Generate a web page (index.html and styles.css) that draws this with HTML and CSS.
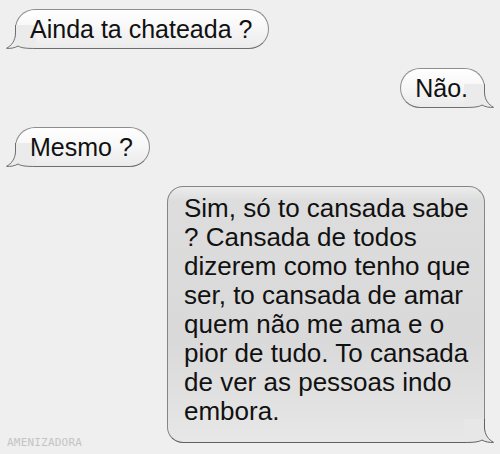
FILE: index.html
```html
<!DOCTYPE html>
<html lang="pt">
<head>
    <meta charset="UTF-8">
    <meta name="viewport" content="width=device-width, initial-scale=1.0">
    <title>Conversa</title>
    <link rel="stylesheet" href="styles.css">
</head>
<body>

<div class="chat">
    <!-- recebida -->
    <div class="bubble them">
        <span class="text">Ainda ta chateada ?</span>
        <svg class="tail" viewBox="0 0 30 24" width="30" height="24">
            <rect class="erase" x="9" y="17" width="21" height="7"/>
            <path class="fill" d="M9.5,0 L9.5,8 C9.5,16 5,21 0.5,23.3 C4.5,23.8 9,22.8 12,21 C15,22.8 19,23.5 30,23.5 L30,0 Z"/>
            <path class="line" d="M9.5,0 L9.5,8 C9.5,16 5,21 0.5,23.3 C4.5,23.8 9,22.8 12,21 C15,22.8 19,23.5 30,23.5"/>
        </svg>
    </div>

    <!-- enviada -->
    <div class="bubble me">
        <span class="text">Não.</span>
        <svg class="tail" viewBox="0 0 30 24" width="30" height="24">
            <rect class="erase" x="9" y="17" width="21" height="7"/>
            <path class="fill" d="M9.5,0 L9.5,8 C9.5,16 5,21 0.5,23.3 C4.5,23.8 9,22.8 12,21 C15,22.8 19,23.5 30,23.5 L30,0 Z"/>
            <path class="line" d="M9.5,0 L9.5,8 C9.5,16 5,21 0.5,23.3 C4.5,23.8 9,22.8 12,21 C15,22.8 19,23.5 30,23.5"/>
        </svg>
    </div>

    <div class="bubble them">
        <span class="text">Mesmo ?</span>
        <svg class="tail" viewBox="0 0 30 24" width="30" height="24">
            <rect class="erase" x="9" y="17" width="21" height="7"/>
            <path class="fill" d="M9.5,0 L9.5,8 C9.5,16 5,21 0.5,23.3 C4.5,23.8 9,22.8 12,21 C15,22.8 19,23.5 30,23.5 L30,0 Z"/>
            <path class="line" d="M9.5,0 L9.5,8 C9.5,16 5,21 0.5,23.3 C4.5,23.8 9,22.8 12,21 C15,22.8 19,23.5 30,23.5"/>
        </svg>
    </div>

    <div class="bubble me long">
        <span class="text">Sim, só to cansada sabe<br>
        ? Cansada de todos<br>
        dizerem como tenho que<br>
        ser, to cansada de amar<br>
        quem não me ama e o<br>
        pior de tudo. To cansada<br>
        de ver as pessoas indo<br>
        embora.</span>
        <svg class="tail" viewBox="0 0 30 24" width="30" height="24">
            <rect class="erase" x="9" y="17" width="21" height="7"/>
            <path class="fill" d="M9.5,0 L9.5,8 C9.5,16 5,21 0.5,23.3 C4.5,23.8 9,22.8 12,21 C15,22.8 19,23.5 30,23.5 L30,0 Z"/>
            <path class="line" d="M9.5,0 L9.5,8 C9.5,16 5,21 0.5,23.3 C4.5,23.8 9,22.8 12,21 C15,22.8 19,23.5 30,23.5"/>
        </svg>
    </div>
</div>

<div class="watermark">AMENIZADORA</div>

</body>
</html>
```

FILE: styles.css
```css
* {
    margin: 0;
    padding: 0;
    box-sizing: border-box;
}

body {
    font-family: "Liberation Sans", Arial, sans-serif;
    background-color: #efefef;
    color: #111;
    width: 500px;
    height: 454px;
    overflow: hidden;
    position: relative;
}

.chat {
    display: flex;
    flex-direction: column;
    gap: 19px;
    padding: 9px 15px 0 15px;
}

.bubble {
    position: relative;
    font-size: 25px;
    line-height: 38px;
    height: 40px;
    padding: 0 16px 0 14px;
    border: 1px solid #8e8e8e;
    border-bottom-color: #6e6e6e;
    border-radius: 20px;
    background: linear-gradient(#ffffff, #f7f7f7 45%, #ebebeb 100%);
    white-space: nowrap;
}

.bubble .text {
    position: relative;
    z-index: 1;
}

.bubble.them {
    align-self: flex-start;
    border-bottom-left-radius: 0;
}

.bubble.me {
    align-self: flex-end;
    border-bottom-right-radius: 0;
    padding: 0 16px 0 14px;
}

.bubble.long {
    width: 318px;
    height: auto;
    font-size: 26px;
    line-height: 29px;
    padding: 7px 8px 16px 16px;
    border-radius: 16px;
    border-bottom-right-radius: 0;
    border-color: #858585;
    border-bottom-color: #606060;
    background: linear-gradient(#ececec, #dddddd 14px, #d9d9d9 60%, #e7e7e7 100%);
}

/* rabinho do balao */
.tail {
    position: absolute;
    bottom: -1px;
    display: block;
}

.them .tail {
    left: -10px;
}

.me .tail {
    right: -10px;
    transform: scaleX(-1);
}

.tail .erase {
    fill: #efefef;
}

.tail .fill {
    fill: #ebebeb;
}

.long .tail .fill {
    fill: #e7e7e7;
}

.tail .line {
    fill: none;
    stroke: #6e6e6e;
    stroke-width: 1;
}

.long .tail .line {
    stroke: #606060;
}

.watermark {
    position: absolute;
    left: 7px;
    top: 436px;
    font-family: "DejaVu Sans Mono", monospace;
    font-size: 11px;
    letter-spacing: 0.2px;
    color: #c4c4c4;
}
```
